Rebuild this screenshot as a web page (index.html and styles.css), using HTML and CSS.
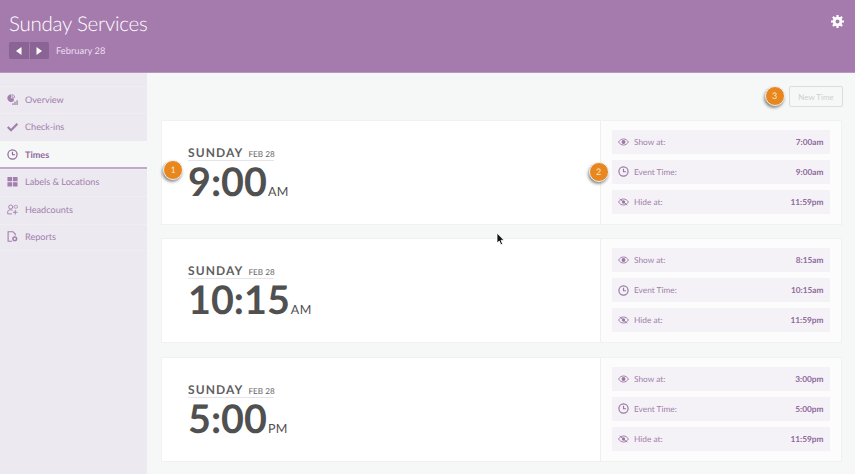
FILE: index.html
```html
<!DOCTYPE html>
<html lang="en">
<head>
    <meta charset="UTF-8">
    <meta name="viewport" content="width=device-width, initial-scale=1.0">
    <title>Sunday Services</title>
    <link rel="stylesheet" href="styles.css">
</head>
<body>

    <svg class="defs" width="0" height="0">
        <symbol id="i-clock" viewBox="0 0 12 12">
            <circle cx="6" cy="6" r="5" fill="none" stroke="currentColor" stroke-width="1.3"/>
            <path d="M6 3v3.300h2.800" fill="none" stroke="currentColor" stroke-width="1.300"/>
        </symbol>
        <symbol id="i-eye" viewBox="0 0 12 8">
            <path d="M.6 4C2 1.8 3.8.7 6 .7s4 1.1 5.4 3.3C10 6.2 8.200 7.300 6 7.300S2 6.200.6 4z" fill="none" stroke="currentColor" stroke-width="1"/>
            <circle cx="6" cy="4" r="2.100" fill="currentColor"/>
        </symbol>
        <symbol id="i-eye-off" viewBox="0 0 12 8">
            <path d="M.6 4C2 1.800 3.800.7 6 .7s4 1.100 5.400 3.300C10 6.200 8.200 7.300 6 7.300S2 6.200.6 4z" fill="none" stroke="currentColor" stroke-width="1"/>
            <circle cx="6" cy="4" r="1.800" fill="currentColor"/>
            <path d="M1.800.6l8.400 6.800" fill="none" stroke="currentColor" stroke-width="1"/>
        </symbol>
    </svg>

    <header class="topbar">
        <div>
            <h1>Sunday Services</h1>
            <div class="date-nav">
                <div class="arrows">
                    <button class="arrow"><svg width="6" height="8" viewBox="0 0 6 8"><path d="M5.500 0v8L0 4z" fill="#fff"/></svg></button>
                    <button class="arrow"><svg width="6" height="8" viewBox="0 0 6 8"><path d="M.5 0v8L6 4z" fill="#fff"/></svg></button>
                </div>
                <span>February 28</span>
            </div>
        </div>
        <svg class="gear" width="13" height="13" viewBox="0 0 13 13">
            <circle cx="6.500" cy="6.500" r="3.400" fill="none" stroke="#fff" stroke-width="2.800"/>
            <path d="M6.500 0v13M0 6.500h13M1.900 1.900l9.200 9.200M11.100 1.900l-9.200 9.200" stroke="#fff" stroke-width="2.200" stroke-dasharray="2.400 8.200 2.400"/>
        </svg>
    </header>

    <div class="layout">
        <nav class="sidebar">
            <a class="nav-item">
                <svg class="nav-icon" viewBox="0 0 12 12"><path d="M4.500.3a4.200 4.200 0 1 0 2.900 7.300V4.700H4.500z" fill="currentColor"/><path d="M5.600.5A4.200 4.200 0 0 1 8.600 3.600H5.600z" fill="none" stroke="currentColor" stroke-width=".8"/><path d="M5.800 10h1.400v2H5.800zM8 8.400h1.400V12H8zM10.300 6.800H11.700V12h-1.400z" fill="currentColor"/></svg>
                Overview
            </a>
            <a class="nav-item">
                <svg class="nav-icon" viewBox="0 0 12 12"><path d="M.8 6.500l3.600 3.500L11.300 3" fill="none" stroke="currentColor" stroke-width="2.400"/></svg>
                Check-ins
            </a>
            <a class="nav-item active">
                <svg class="nav-icon"><use href="#i-clock"/></svg>
                Times
            </a>
            <a class="nav-item">
                <svg class="nav-icon" viewBox="0 0 12 12"><path d="M.5 1h5.100v4.800H.5zM6.500 1h5v4.800h-5zM.5 6.800h5.100v4.700H.5zM6.500 6.800h5v4.700h-5z" fill="currentColor"/></svg>
                Labels &amp; Locations
            </a>
            <a class="nav-item">
                <svg class="nav-icon" viewBox="0 0 12 12"><g fill="none" stroke="currentColor"><circle cx="4" cy="3.300" r="2.200"/><rect x="7.500" y="1.500" width="4" height="3" rx="1.400" stroke-width=".8"/><path d="M6 6.900c-.6-.4-1.200-.6-2-.6-2 0-3.200.8-3.200 2.200v2.300h4.700M9 6.500v5M6.500 9h5"/></g></svg>
                Headcounts
            </a>
            <a class="nav-item">
                <svg class="nav-icon" viewBox="0 0 12 12"><path d="M5.500 11.200H1.200V.8h5.300L9 3.300V5" fill="none" stroke="currentColor" stroke-width="1.200"/><circle cx="8.500" cy="8.500" r="2" fill="none" stroke="currentColor" stroke-width="1.600"/></svg>
                Reports
            </a>
        </nav>

        <main class="content">
            <div class="toolbar">
                <button class="new-time">New Time</button>
            </div>

            <section class="card">
                <div class="card-time">
                    <div class="day-line"><span class="day">SUNDAY</span><span class="day-date">FEB 28</span></div>
                    <div class="clock">9:00<span class="meridiem">AM</span></div>
                </div>
                <div class="card-rows">
                    <div class="row"><svg class="row-eye"><use href="#i-eye"/></svg><span class="row-label">Show at:</span><span class="row-value">7:00am</span></div>
                    <div class="row"><svg class="row-clock"><use href="#i-clock"/></svg><span class="row-label">Event Time:</span><span class="row-value">9:00am</span></div>
                    <div class="row"><svg class="row-eye"><use href="#i-eye-off"/></svg><span class="row-label">Hide at:</span><span class="row-value">11:59pm</span></div>
                </div>
            </section>

            <section class="card">
                <div class="card-time">
                    <div class="day-line"><span class="day">SUNDAY</span><span class="day-date">FEB 28</span></div>
                    <div class="clock">10:15<span class="meridiem">AM</span></div>
                </div>
                <div class="card-rows">
                    <div class="row"><svg class="row-eye"><use href="#i-eye"/></svg><span class="row-label">Show at:</span><span class="row-value">8:15am</span></div>
                    <div class="row"><svg class="row-clock"><use href="#i-clock"/></svg><span class="row-label">Event Time:</span><span class="row-value">10:15am</span></div>
                    <div class="row"><svg class="row-eye"><use href="#i-eye-off"/></svg><span class="row-label">Hide at:</span><span class="row-value">11:59pm</span></div>
                </div>
            </section>

            <section class="card">
                <div class="card-time">
                    <div class="day-line"><span class="day">SUNDAY</span><span class="day-date">FEB 28</span></div>
                    <div class="clock">5:00<span class="meridiem">PM</span></div>
                </div>
                <div class="card-rows">
                    <div class="row"><svg class="row-eye"><use href="#i-eye"/></svg><span class="row-label">Show at:</span><span class="row-value">3:00pm</span></div>
                    <div class="row"><svg class="row-clock"><use href="#i-clock"/></svg><span class="row-label">Event Time:</span><span class="row-value">5:00pm</span></div>
                    <div class="row"><svg class="row-eye"><use href="#i-eye-off"/></svg><span class="row-label">Hide at:</span><span class="row-value">11:59pm</span></div>
                </div>
            </section>
        </main>
    </div>

    <!-- tour badges and mouse pointer lie over the page -->
    <div class="badge badge-1">1</div>
    <div class="badge badge-2">2</div>
    <div class="badge badge-3">3</div>
    <svg class="cursor" width="10" height="14" viewBox="0 0 10 14"><path d="M1 1v10l2.300-2 1.600 3.800 1.700-.8L5 8.300h3z" fill="#111" stroke="#fff" stroke-width=".8"/></svg>

</body>
</html>
```

FILE: styles.css
```css
* {
    box-sizing: border-box;
}
html, body {
    height: 100%;
}
body {
    margin: 0;
    height: 474px;
    overflow: hidden;
    font-family: Lato, sans-serif;
    text-rendering: geometricPrecision;
    background: #f6f7f7;
    color: #555;
    display: flex;
    flex-direction: column;
}
.defs {
    position: absolute;
}
.topbar {
    height: 73px;
    flex: none;
    background: #a57bad;
    border-bottom: 1px solid #b797bd;
    padding: 10px 11px 0 9px;
    display: flex;
    justify-content: space-between;
    align-items: flex-start;
    color: #fff;
}
.topbar h1 {
    margin: 0;
    font-size: 20.500px;
    letter-spacing: -.25px;
    line-height: 28px;
    font-weight: 300;
}
.date-nav {
    margin-top: 4px;
    display: flex;
    align-items: center;
    gap: 7px;
    font-size: 9.300px;
    color: #ecdff0;
}
.arrows {
    display: flex;
    gap: 1px;
}
.arrow {
    width: 19.500px;
    height: 17px;
    padding: 0;
    border: none;
    background: #8b6496;
    display: flex;
    align-items: center;
    justify-content: center;
}
.arrow:first-child {
    border-radius: 2px 0 0 2px;
}
.arrow:last-child {
    border-radius: 0 2px 2px 0;
}
.gear {
    margin-top: 5px;
}
.layout {
    flex: 1;
    display: flex;
    min-height: 0;
}
.sidebar {
    width: 147px;
    flex: none;
    background: #ece9f0;
    padding-top: 12.800px;
}
.nav-item {
    height: 27.600px;
    display: flex;
    align-items: center;
    gap: 7.500px;
    padding: 0 0 2px 6.500px;
    font-size: 9.100px;
    color: #a27fad;
    border-top: 1px solid #f0edf3;
}
.nav-item:last-child {
    border-bottom: 1px solid #f0edf3;
}
.nav-item.active {
    background: #f6f7f7;
    color: #8f6a9c;
    font-weight: 700;
    border-top: none;
    padding: 1px 0 0 6.500px;
    border-bottom: 2px solid #c3a8cc;
}
.nav-icon {
    width: 11px;
    height: 11px;
    flex: none;
}
.content {
    flex: 1;
    padding: 13px 13px 0 14px;
}
.toolbar {
    display: flex;
    justify-content: flex-end;
    height: 33.700px;
    margin-right: -1px;
}
.new-time {
    width: 54px;
    height: 21px;
    padding: 0;
    font-family: Lato, sans-serif;
    font-size: 8px;
    color: #cfcfcf;
    background: #f6f7f7;
    border: 1px solid #dcdddd;
    border-radius: 2px;
}
.card {
    height: 105px;
    margin-bottom: 13.500px;
    display: flex;
    background: #fff;
    border: 1px solid #f0f1f1;
}
.card-time {
    width: 438px;
    padding: 25px 0 0 26px;
}
.day-line {
    width: 86px;
    height: 15px;
    line-height: 14px;
    white-space: nowrap;
    border-bottom: 1px solid #e6e3ea;
    display: flex;
    align-items: baseline;
    gap: 5px;
}
.day {
    font-size: 12px;
    font-weight: 700;
    letter-spacing: 1.100px;
    color: #5e5e5e;
}
.day-date {
    font-size: 8.200px;
    color: #666;
}
.clock {
    font-size: 39.500px;
    line-height: 42px;
    font-weight: 700;
    color: #505050;
    white-space: nowrap;
}
.meridiem {
    font-size: 12.500px;
    font-weight: 400;
    letter-spacing: .4px;
    margin-left: 1px;
}
.card-rows {
    flex: 1;
    background: #fcfcfc;
    border-left: 1px solid #eeeff0;
    padding: 9px 11px 0 11px;
    display: flex;
    flex-direction: column;
    gap: 6px;
}
.row {
    height: 24px;
    background: #f5f2f7;
    display: flex;
    align-items: center;
    padding: 0 6.500px 0 6px;
    font-size: 8.300px;
    color: #a07eaa;
}
.row svg {
    color: #9a77a5;
    flex: none;
}
.row-eye {
    width: 11px;
    height: 8px;
    margin-right: 5px;
}
.row-clock {
    width: 11px;
    height: 11px;
    margin-right: 5px;
}
.row-label {
    flex: 1;
}
.row-value {
    font-weight: 700;
    color: #8f6a9c;
}
.badge {
    position: absolute;
    width: 20px;
    height: 20px;
    border-radius: 50%;
    background: #e8871e;
    border: 1px solid #f1f1f1;
    box-shadow: -1px 2px 3px rgba(0, 0, 0, 0.45);
    color: #fbe6cc;
    font-size: 9px;
    line-height: 18px;
    text-align: center;
}
.badge-1 { left: 163px; top: 160px; }
.badge-2 { left: 588.500px; top: 162px; }
.badge-3 { left: 764.500px; top: 85.500px; }
.cursor {
    position: absolute;
    left: 496px;
    top: 232px;
}
```
